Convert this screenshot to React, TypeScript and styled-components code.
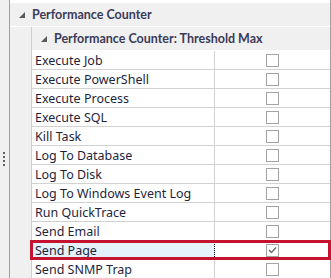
import { createGlobalStyle, styled } from "styled-components";

const GlobalStyle = createGlobalStyle`
  html, body {
    margin: 0;
    padding: 0;
    background: #ffffff;
    overflow: hidden;
  }
  body {
    font-family: "Noto Sans", "DejaVu Sans", sans-serif;
    font-size: 12.5px;
  }
`;

const items = [
  { name: "Execute Job", checked: false },
  { name: "Execute PowerShell", checked: false },
  { name: "Execute Process", checked: false },
  { name: "Execute SQL", checked: false },
  { name: "Kill Task", checked: false },
  { name: "Log To Database", checked: false },
  { name: "Log To Disk", checked: false },
  { name: "Log To Windows Event Log", checked: false },
  { name: "Run QuickTrace", checked: false },
  { name: "Send Email", checked: false },
  { name: "Send Page", checked: true, selected: true },
  { name: "Send SNMP Trap", checked: false },
];

const Page = styled.div`
  display: flex;
  width: 331px;
  height: 278px;
  overflow: hidden;
`;

const Splitter = styled.div`
  width: 10px;
  flex: none;
  background: #f0f0f0;
  border-right: 1px solid #a0a0a0;
  display: flex;
  align-items: center;
  justify-content: flex-start;
  padding-left: 3px;
  box-sizing: border-box;
  padding-top: 40px;
`;

const Grip = styled.div`
  display: flex;
  flex-direction: column;
  gap: 2px;
  span {
    display: block;
    width: 2px;
    height: 2px;
    background: #606060;
  }
`;

const Grid = styled.div`
  flex: 1;
  display: flex;
  flex-direction: column;
  border-right: 1px solid #a0a0a0;
  padding-top: 3px;
`;

const CategoryHeader = styled.div<{ $indent: number }>`
  flex: none;
  display: flex;
  align-items: center;
  background: #f0f0f0;
  border-bottom: 1px solid #ffffff;
  padding-left: ${(p) => p.$indent}px;
  font-family: Lato, "Noto Sans", sans-serif;
  font-size: 12.5px;
  font-weight: bold;
  color: #3b3b58;
  gap: 7px;
  box-sizing: border-box;
  height: 24px;
`;

const Expander = () => (
  <svg width="6" height="6" viewBox="0 0 6 6">
    <path d="M6 0 L6 6 L0 6 Z" fill="#5a5a5a" />
  </svg>
);

const Body = styled.div`
  flex: 1;
  display: flex;
`;

const Indent = styled.div`
  width: 21px;
  flex: none;
  background: #f0f0f0;
  border-right: 1px solid #cfcfcf;
`;

const Inner = styled.div`
  flex: 1;
  display: flex;
  flex-direction: column;
`;

const Row = styled.div<{ $selected?: boolean }>`
  position: relative;
  height: 19px;
  flex: none;
  display: grid;
  grid-template-columns: 183px 1fr;
  border-bottom: 1px solid #d2d2d2;
  box-sizing: border-box;
  ${(p) =>
    p.$selected &&
    `
    &::after {
      content: "";
      position: absolute;
      left: -2px;
      right: -1px;
      top: -1px;
      bottom: -1px;
      border: 3px solid #c4122f;
      pointer-events: none;
    }
  `}
`;

const NameCell = styled.div<{ $selected?: boolean }>`
  display: flex;
  align-items: center;
  padding-left: 3px;
  color: #1f1f3d;
  white-space: nowrap;
  overflow: hidden;
  border-right: 1px ${(p) => (p.$selected ? "dotted #000000" : "solid #d2d2d2")};
  background: ${(p) => (p.$selected ? "#e5f1fb" : "#ffffff")};
`;

const ValueCell = styled.div`
  display: flex;
  align-items: center;
  justify-content: center;
  padding-right: 1px;
`;

const CheckBox = styled.div`
  width: 11px;
  height: 11px;
  border: 1px solid #a3a3a3;
  background: #ffffff;
  display: flex;
  align-items: center;
  justify-content: center;
`;

export default function App() {
  return (
    <>
      <GlobalStyle />
      <Page>
        <Splitter>
          <Grip>
            <span />
            <span />
            <span />
            <span />
          </Grip>
        </Splitter>
        <Grid>
          <CategoryHeader $indent={9}>
            <Expander />
            Performance Counter
          </CategoryHeader>
          <Body>
            <Indent />
            <Inner>
              <CategoryHeader $indent={9}>
                <Expander />
                Performance Counter: Threshold Max
              </CategoryHeader>
              {items.map((item) => (
                <Row key={item.name} $selected={item.selected}>
                  <NameCell $selected={item.selected}>{item.name}</NameCell>
                  <ValueCell>
                    <CheckBox>
                      {item.checked && (
                        <svg width="9" height="8" viewBox="0 0 9 8">
                          <path
                            d="M1 4 L3.5 6.5 L8 1.5"
                            fill="none"
                            stroke="#6a6a6a"
                            strokeWidth="1.4"
                          />
                        </svg>
                      )}
                    </CheckBox>
                  </ValueCell>
                </Row>
              ))}
            </Inner>
          </Body>
        </Grid>
      </Page>
    </>
  );
}
